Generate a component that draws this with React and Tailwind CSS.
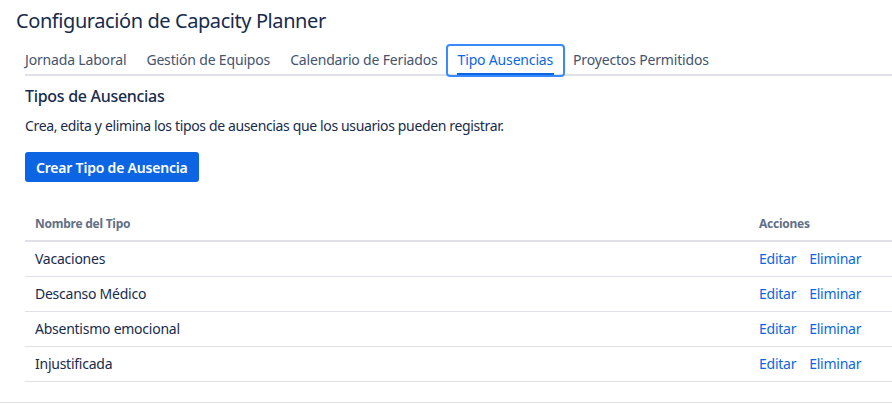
import React from "react";

const tabs = ["Jornada Laboral", "Gestión de Equipos", "Calendario de Feriados", "Tipo Ausencias", "Proyectos Permitidos"];
const rows = ["Vacaciones", "Descanso Médico", "Absentismo emocional", "Injustificada"];

export default function App() {
  return (
    <div
      className="w-[892px] h-[404px] bg-white overflow-hidden text-[#172b4d]"
      style={{ fontFamily: '"Noto Sans", "Open Sans", sans-serif' }}
    >
      <div className="h-[403px] border-b border-[#dcdfe4]">
        <h1 className="pl-4 pt-[7px] text-[20px] leading-[28px] font-normal tracking-[-0.42px]">Configuración de Capacity Planner</h1>
        <div className="ml-[25px] mt-[9px] flex border-b-2 border-[#dfe1e6]">
          {tabs.map((t, i) => {
            const active = t === "Tipo Ausencias";
            return (
              <div
                key={t}
                className={`relative h-[30px] px-[10px] flex items-center text-[14px] tracking-[-0.17px] whitespace-nowrap ${i === 0 ? "-ml-[10px]" : ""} ${active ? "text-[#0c66e4]" : "text-[#44546f]"}`}
              >
                {t}
                {active && (
                  <>
                    <span className="absolute left-[-2px] right-[-2px] top-0 bottom-[-3px] border-2 border-[#388bff] rounded-[4px]" />
                    <span className="absolute left-[9px] right-[9px] bottom-[-1px] h-[2px] bg-[#0c66e4]" />
                  </>
                )}
              </div>
            );
          })}
        </div>
        <div className="pl-[25px]">
          <h2 className="mt-[8px] text-[16px] leading-[24px] font-medium tracking-[-0.3px]">Tipos de Ausencias</h2>
          <p className="mt-[8px] text-[14px] leading-[20px] text-[#172b4d] tracking-[-0.36px]">
            Crea, edita y elimina los tipos de ausencias que los usuarios pueden registrar.
          </p>
          <button className="mt-[16px] h-[30px] px-[11px] rounded-[3px] bg-[#0c66e4] text-white text-[14px] font-semibold tracking-[-0.2px]">
            Crear Tipo de Ausencia
          </button>
          <table className="mt-[25px] w-[900px] border-collapse text-[14px] tracking-[-0.25px]">
            <thead>
              <tr className="border-b-2 border-[#dfe1e6]">
                <th className="h-[34px] px-[10px] text-left text-[12px] font-bold text-[#626f86]">Nombre del Tipo</th>
                <th className="w-[176px] h-[34px] px-[10px] text-left text-[12px] font-bold text-[#626f86]">Acciones</th>
              </tr>
            </thead>
            <tbody>
              {rows.map((r) => (
                <tr key={r} className="border-b border-[#dfe1e6]">
                  <td className="h-[35px] px-[10px]">{r}</td>
                  <td className="h-[35px] px-[10px] text-[#0c66e4] whitespace-nowrap">
                    <span>Editar</span>
                    <span className="ml-[13px]">Eliminar</span>
                  </td>
                </tr>
              ))}
            </tbody>
          </table>
        </div>
      </div>
    </div>
  );
}
